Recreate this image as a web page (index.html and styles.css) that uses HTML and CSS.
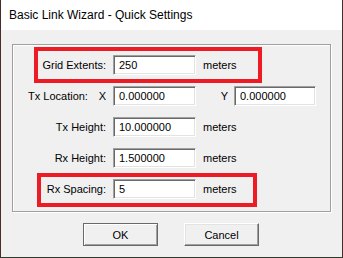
FILE: index.html
```html
<!DOCTYPE html>
<html lang="en">

<head>
    <meta charset="UTF-8">
    <meta name="viewport" content="width=device-width, initial-scale=1.0">
    <title>Basic Link Wizard - Quick Settings</title>
    <link rel="stylesheet" href="styles.css">
</head>

<body>

    <div class="window">
        <div class="titlebar">
            <span class="title">Basic Link Wizard - Quick Settings</span>
        </div>

        <div class="client">
            <div class="group">
                <div class="row">
                    <div class="lbl">Grid Extents:</div>
                    <div class="edit">250</div>
                    <div class="unit">meters</div>
                </div>
                <div class="row">
                    <div class="lbl lbl-split"><span>Tx Location:</span><span>X</span></div>
                    <div class="edit">0.000000</div>
                    <div class="axis">Y</div>
                    <div class="edit edit-y">0.000000</div>
                </div>
                <div class="row">
                    <div class="lbl">Tx Height:</div>
                    <div class="edit">10.000000</div>
                    <div class="unit">meters</div>
                </div>
                <div class="row">
                    <div class="lbl">Rx Height:</div>
                    <div class="edit">1.500000</div>
                    <div class="unit">meters</div>
                </div>
                <div class="row">
                    <div class="lbl">Rx Spacing:</div>
                    <div class="edit">5</div>
                    <div class="unit">meters</div>
                </div>

                <!-- red highlight boxes -->
                <div class="mark mark-grid"></div>
                <div class="mark mark-spacing"></div>
            </div>

            <div class="buttons">
                <div class="btn btn-default">OK</div>
                <div class="btn">Cancel</div>
            </div>
        </div>
    </div>

</body>

</html>
```

FILE: styles.css
```css
* {
    margin: 0;
    padding: 0;
    box-sizing: border-box;
}

body {
    width: 343px;
    height: 258px;
    overflow: hidden;
    background: #2f3b2a;
    font-family: "Liberation Sans", Arial, sans-serif;
    font-size: 11px;
    color: #000;
}

.window {
    width: 343px;
    height: 257px;
    display: flex;
    flex-direction: column;
    border-left: 1px solid #4a2a2a;
    border-right: 1px solid #4a2a2a;
    background: #f0f0f0;
}

.titlebar {
    height: 30px;
    background: #fff;
    display: flex;
    align-items: center;
    padding-left: 8px;
}

.title {
    font-size: 12px;
    color: #000;
}

.client {
    flex: 1;
    padding-left: 11px;
    padding-top: 14px;
}

/* etched group box */
.group {
    position: relative;
    width: 319px;
    border: 1px solid #a0a0a0;
    box-shadow: inset 1px 1px #fff, 1px 1px #fff;
    padding: 10px 0 12px 0;
    display: flex;
    flex-direction: column;
    gap: 11px;
}

.row {
    display: flex;
    align-items: center;
    height: 20px;
}

.lbl {
    width: 93px;
    margin-right: 7px;
    text-align: right;
    white-space: nowrap;
}

.lbl-split {
    display: flex;
    justify-content: space-between;
    padding-left: 15px;
}

.edit {
    width: 83px;
    height: 20px;
    background: #fff;
    border-style: solid;
    border-width: 1px;
    border-color: #a0a0a0 #fff #fff #a0a0a0;
    box-shadow: inset 1px 1px #696969, inset -1px -1px #e3e3e3;
    padding-left: 5px;
    line-height: 18px;
}

.edit-y {
    width: 82px;
}

.unit {
    margin-left: 7px;
}

.axis {
    width: 38px;
    text-align: right;
    padding-right: 6px;
}

.mark {
    position: absolute;
    border: 4px solid #ed1c24;
}

.mark-grid {
    left: 21px;
    top: 2px;
    width: 228px;
    height: 36px;
}

.mark-spacing {
    left: 24px;
    top: 128px;
    width: 220px;
    height: 34px;
}

.buttons {
    display: flex;
    gap: 26px;
    padding-left: 71px;
    margin-top: 11px;
}

.btn {
    width: 75px;
    height: 23px;
    display: flex;
    justify-content: center;
    align-items: center;
    border: 1px solid;
    border-color: #fff #696969 #696969 #fff;
    box-shadow: inset -1px -1px #a0a0a0, inset 1px 1px #e3e3e3;
    background: #f0f0f0;
}

.btn-default {
    border-color: #696969;
    box-shadow: inset 1px 1px #fff, inset -1px -1px #a0a0a0;
}
```
